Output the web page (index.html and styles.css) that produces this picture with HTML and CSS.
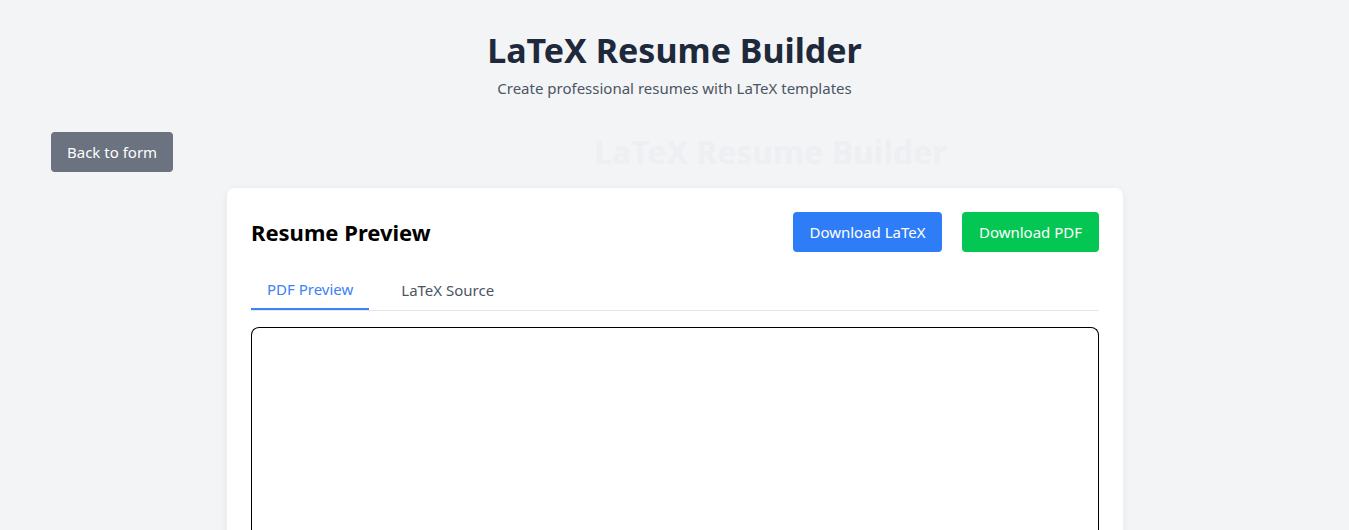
FILE: index.html
```html
<!DOCTYPE html>
<html lang="en">
<head>
<meta charset="utf-8">
<title>LaTeX Resume Builder</title>
<link rel="stylesheet" href="styles.css">
</head>
<body>
<header class="header">
  <h1 class="title">LaTeX Resume Builder</h1>
  <p class="subtitle">Create professional resumes with LaTeX templates</p>
</header>
<div class="toolbar">
  <button class="btn btn-gray">Back to form</button>
  <div class="ghost">LaTeX Resume Builder</div>
</div>
<main class="card">
  <div class="card-head">
    <h2 class="card-title">Resume Preview</h2>
    <div class="actions">
      <button class="btn btn-blue">Download LaTeX</button>
      <button class="btn btn-green">Download PDF</button>
    </div>
  </div>
  <nav class="tabs">
    <button class="tab active">PDF Preview</button>
    <button class="tab">LaTeX Source</button>
  </nav>
  <div class="preview"></div>
</main>
</body>
</html>
```

FILE: styles.css
```css
* { box-sizing: border-box; }
html, body { margin: 0; padding: 0; }
body {
  background: #f3f4f6;
  font-family: "Noto Sans", "Open Sans", "DejaVu Sans", sans-serif;
  color: #1f2937;
  min-height: 530px;
  overflow: hidden;
}
.header {
  text-align: center;
  padding-top: 26px;
}
.title {
  margin: 0;
  font-size: 34px;
  line-height: 48px;
  font-weight: 700;
  color: #1e293b;
}
.subtitle {
  margin: 3px 0 0;
  font-size: 15px;
  line-height: 22px;
  color: #4b5563;
}
.toolbar {
  position: relative;
  margin-top: 33px;
  padding-left: 51px;
  height: 40px;
  display: flex;
  align-items: center;
}
.ghost {
  position: absolute;
  left: 594px;
  top: 0;
  font-size: 32px;
  line-height: 40px;
  font-weight: 700;
  color: #edeff2;
  white-space: nowrap;
}
.btn {
  font-family: inherit;
  font-size: 15px;
  height: 40px;
  border: none;
  border-radius: 4px;
  color: #fff;
  padding: 0 16px;
  cursor: pointer;
  white-space: nowrap;
}
.btn-gray { background: #6b7280; min-width: 121px; }
.btn-blue { background: #2f7df6; min-width: 149px; }
.btn-green { background: #04c652; min-width: 137px; }
.card {
  width: 896px;
  margin: 16px auto 0 227px;
  background: #fff;
  border-radius: 8px;
  padding: 24px 24px 0;
  box-shadow: 0 2px 8px rgba(0,0,0,0.06);
  min-height: 360px;
}
.card-head {
  display: flex;
  justify-content: space-between;
  align-items: center;
  height: 40px;
}
.card-title {
  margin: 0;
  font-size: 22px;
  font-weight: 700;
  color: #000;
}
.actions {
  display: flex;
  gap: 20px;
}
.tabs {
  display: flex;
  gap: 16px;
  margin-top: 18px;
  border-bottom: 1px solid #e5e7eb;
  height: 41px;
}
.tab {
  font-family: inherit;
  font-size: 15px;
  background: none;
  border: none;
  padding: 0 16px;
  height: 40px;
  color: #4b5563;
  cursor: pointer;
}
.tab.active {
  color: #3b82f6;
  border-bottom: 2px solid #3b82f6;
}
.preview {
  margin-top: 16px;
  height: 260px;
  border: 1px solid #000;
  border-bottom: none;
  border-radius: 8px 8px 0 0;
}
```
